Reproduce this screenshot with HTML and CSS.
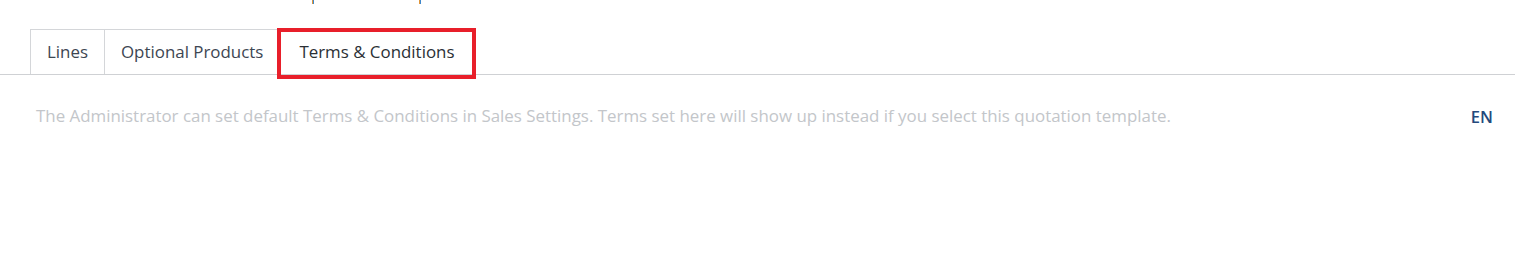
FILE: index.html
```html
<!DOCTYPE html>
<html lang="en">
<head>
<meta charset="utf-8">
<title>Quotation template - Terms</title>
<link rel="stylesheet" href="styles.css">
</head>
<body>
<div class="top-strip">
  <span class="mark mark-a"></span>
  <span class="mark mark-b"></span>
</div>
<ul class="tabs">
  <li class="tab">Lines</li>
  <li class="tab">Optional Products</li>
  <li class="tab tab-active">Terms &amp; Conditions</li>
</ul>
<div class="pane">
  <p class="placeholder">The Administrator can set default Terms &amp; Conditions in Sales Settings. Terms set here will show up instead if you select this quotation template.</p>
  <span class="lang">EN</span>
</div>
</body>
</html>
```
FILE: styles.css
```css
html, body {
  margin: 0;
  padding: 0;
  background: #ffffff;
}
body {
  font-family: "Open Sans", "Noto Sans", sans-serif;
  width: 1515px;
  height: 274px;
  overflow: hidden;
}
.top-strip {
  display: flex;
  height: 4px;
  align-items: flex-start;
}
.mark {
  display: block;
  width: 2px;
  height: 4px;
  background: linear-gradient(90deg, #e0963a 0 50%, #3f88cc 50% 100%);
}
.mark-a { margin-left: 312px; }
.mark-b { margin-left: 105px; }
.tabs {
  list-style: none;
  margin: 25px 0 0 0;
  padding: 0 0 0 30px;
  display: flex;
  border-bottom: 1px solid #cfd1d4;
}
.tab {
  font-size: 16.9px;
  color: #3d4652;
  height: 44px;
  line-height: 44px;
  padding: 0 16px;
  border: 1px solid #d4d6d9;
  border-bottom: none;
  white-space: nowrap;
}
.tab + .tab {
  border-left: none;
}
.tab-active {
  position: relative;
  border-color: transparent;
  color: #2a2f35;
  padding: 0 18px 0 19px;
}
.tab-active::after {
  content: "";
  position: absolute;
  left: -3px;
  right: -4px;
  top: -2px;
  bottom: -5px;
  border: 4px solid #e81f2a;
}
.pane {
  display: flex;
  justify-content: space-between;
  align-items: flex-start;
  padding: 29px 22px 0 36px;
}
.placeholder {
  margin: 0;
  font-size: 16.9px;
  line-height: 24px;
  color: #c3c6ca;
}
.lang {
  font-size: 16.5px;
  line-height: 24px;
  margin-top: 1px;
  font-weight: 600;
  color: #24497c;
}
```
